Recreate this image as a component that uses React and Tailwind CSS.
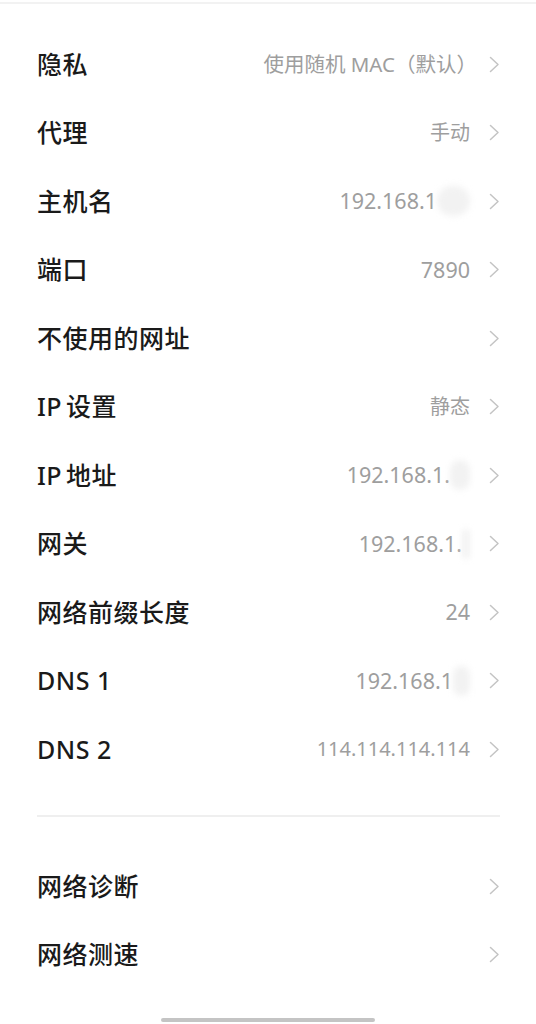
const group1 = [
  { label: "隐私", value: "使用随机 MAC（默认）", wide: true },
  { label: "代理", value: "手动" },
  { label: "主机名", value: "192.168.1", blob: "w-[33px]", num: true },
  { label: "端口", value: "7890", num: true },
  { label: "不使用的网址", value: "" },
  { label: "IP", rest: "设置", value: "静态" },
  { label: "IP", rest: "地址", value: "192.168.1.", blob: "w-[20px]", num: true },
  { label: "网关", value: "192.168.1.", blob: "w-[8px]", num: true },
  { label: "网络前缀长度", value: "24", num: true },
  { label: "DNS 1", value: "192.168.1", blob: "w-[17px]", num: true },
  { label: "DNS 2", value: "114.114.114.114" },
];

const group2 = [{ label: "网络诊断" }, { label: "网络测速" }];

function Chevron() {
  return (
    <svg width="11" height="17" viewBox="0 0 11 17" fill="none" className="shrink-0">
      <path d="M1.5 1.5 L9 8.5 L1.5 15.5" stroke="#c4c4c4" strokeWidth="1.5" strokeLinecap="round" strokeLinejoin="round" />
    </svg>
  );
}

function Row({ label, rest, value, blob, num, wide, h }) {
  return (
    <div className={`flex items-center justify-between ${h}`}>
      <span className="text-[25px] font-medium text-[#1a1a1a] tracking-[0.5px]">
        {label}
        {rest && <span className="ml-[4px]">{rest}</span>}
      </span>
      <div className="flex items-center gap-[19px]">
        {value ? (
          <span
            className={`flex items-center ${num ? "text-[21.5px]" : wide ? "text-[20.5px] -mr-[7px]" : "text-[20px]"} text-[#9e9e9e]`}
          >
            {value}
            {blob && <span className={`inline-block h-[30px] ${blob} bg-[#f2f2f2] rounded-full blur-[3px]`} />}
          </span>
        ) : null}
        <Chevron />
      </div>
    </div>
  );
}

export default function App() {
  return (
    <div
      className="w-[536px] h-[1024px] bg-white relative overflow-hidden"
      style={{ fontFamily: '"Noto Sans", "Noto Sans CJK SC", sans-serif' }}
    >
      <div className="h-[2px] mt-[2px] bg-[#f2f2f2]" />

      <div className="pl-[37px] pr-[36px] pt-[26px]">
        {group1.map((r, i) => (
          <Row key={i} {...r} h="h-[68.5px]" />
        ))}

        <div className="mt-[31px] h-[2px] bg-[#efefef]" />

        <div className="pt-[36px]">
          {group2.map((r, i) => (
            <Row key={i} {...r} h="h-[68px]" />
          ))}
        </div>
      </div>

      {/* home indicator */}
      <div className="absolute left-[161px] bottom-[2px] w-[214px] h-[4px] rounded-full bg-[#c4c4c4]" />
    </div>
  );
}
